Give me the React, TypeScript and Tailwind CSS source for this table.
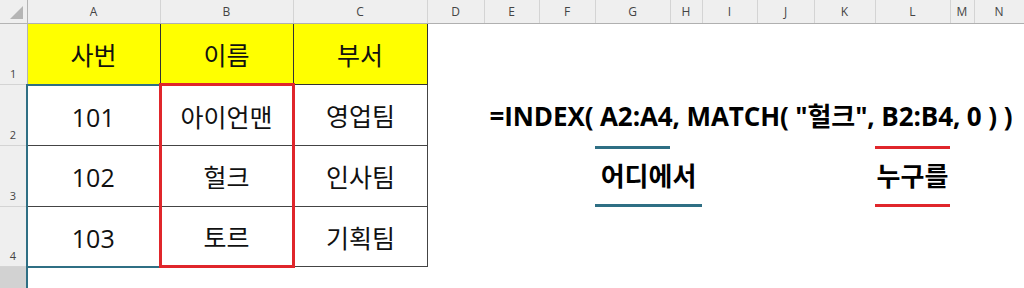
import React from 'react';

const cols = [
  { key: '', w: 27 },
  { key: 'A', w: 133 },
  { key: 'B', w: 133 },
  { key: 'C', w: 134 },
  { key: 'D', w: 57 },
  { key: 'E', w: 55 },
  { key: 'F', w: 56 },
  { key: 'G', w: 75 },
  { key: 'H', w: 32 },
  { key: 'I', w: 55 },
  { key: 'J', w: 57 },
  { key: 'K', w: 61 },
  { key: 'L', w: 75 },
  { key: 'M', w: 24 },
  { key: 'N', w: 50 },
];

const font = "font-['Open_Sans','Noto_Sans_CJK_KR',sans-serif]";

const rows = [
  ['101', '아이언맨', '영업팀'],
  ['102', '헐크', '인사팀'],
  ['103', '토르', '기획팀'],
];

function RowHead({ n, active }: { n?: number; active?: boolean }) {
  return (
    <td
      className={`p-0 align-bottom text-center text-[11px] text-[#444] pb-0.5 border-b border-[#d4d4d4] ${
        active ? 'bg-[#d2d2d2] border-r-2 border-r-[#2f6f84]' : 'bg-[#efefef] border-r border-r-[#b4b4b4]'
      }`}
    >
      {n}
    </td>
  );
}

// label between two rules, the top rule can be shorter than the bottom one
function Label({ text, color, top }: { text: string; color: string; top: string }) {
  return (
    <div className="h-[61px] flex flex-col justify-between">
      <div className={`h-[3px] ${top} ${color}`} />
      <div className="text-center text-[26px] font-bold text-black whitespace-nowrap leading-none">{text}</div>
      <div className={`h-[3px] w-full ${color}`} />
    </div>
  );
}

export default function App() {
  return (
    <div className={`w-[1024px] h-[288px] overflow-hidden bg-white ${font}`}>
      <table className="table-fixed border-collapse w-[1024px]">
        <colgroup>
          {cols.map((c) => (
            <col key={c.key + c.w} style={{ width: c.w }} />
          ))}
        </colgroup>
        <tbody>
          <tr className="h-[23px]">
            <td className="p-0 bg-[#efefef] border-b border-r border-[#b4b4b4]">
              <svg width="27" height="23" className="block">
                <polygon points="23,6 23,19 10,19" fill="#b5b5b5" />
              </svg>
            </td>
            {cols.slice(1).map((c) => (
              <td
                key={c.key}
                className="p-0 text-center text-[12px] text-[#444] bg-[#efefef] border-b border-b-[#b0b0b0] border-r border-r-[#d4d4d4]"
              >
                {c.key}
              </td>
            ))}
          </tr>

          <tr className="h-[61px]">
            <RowHead n={1} />
            {['사번', '이름', '부서'].map((t) => (
              <td key={t} className="p-0 pt-1 text-center text-[25px] text-[#111] bg-[#ffff00] border border-[#333]">
                {t}
              </td>
            ))}
            <td colSpan={11} />
          </tr>

          <tr className="h-[61px]">
            <RowHead n={2} />
            <td className="p-0 pt-1 text-center text-[25px] text-[#111] border border-[#444] border-t-2 border-t-[#2f6f84] border-l-2 border-l-[#2f6f84]">
              {rows[0][0]}
            </td>
            <td className="p-0 pt-1 text-center text-[25px] text-[#111] border border-[#444] border-t-[3px] border-t-[#e0262b] border-x-[3px] border-x-[#e0262b]">
              {rows[0][1]}
            </td>
            <td className="p-0 pt-1 text-center text-[25px] text-[#111] border border-[#444]">{rows[0][2]}</td>
            <td colSpan={11} className="p-0 pl-[62px] pt-0.5 text-[26px] font-bold text-black whitespace-nowrap tracking-[-0.1px]">
              =INDEX( A2:A4, MATCH( "헐크", B2:B4, 0 ) )
            </td>
          </tr>

          <tr className="h-[61px]">
            <RowHead n={3} />
            <td className="p-0 pt-1 text-center text-[25px] text-[#111] border border-[#444] border-l-2 border-l-[#2f6f84]">
              {rows[1][0]}
            </td>
            <td className="p-0 pt-1 text-center text-[25px] text-[#111] border border-[#444] border-x-[3px] border-x-[#e0262b]">
              {rows[1][1]}
            </td>
            <td className="p-0 pt-1 text-center text-[25px] text-[#111] border border-[#444]">{rows[1][2]}</td>
            <td colSpan={3} />
            <td colSpan={2} className="p-0 align-top">
              <Label text="어디에서" color="bg-[#2f6f84]" top="w-[75px]" />
            </td>
            <td colSpan={3} />
            <td className="p-0 align-top">
              <Label text="누구를" color="bg-[#e0262b]" top="w-full" />
            </td>
            <td colSpan={2} />
          </tr>

          <tr className="h-[60px]">
            <RowHead n={4} />
            <td className="p-0 pt-1 text-center text-[25px] text-[#111] border border-[#444] border-l-2 border-l-[#2f6f84] border-b-2 border-b-[#2f6f84]">
              {rows[2][0]}
            </td>
            <td className="p-0 pt-1 text-center text-[25px] text-[#111] border border-[#444] border-b-[3px] border-b-[#e0262b] border-x-[3px] border-x-[#e0262b]">
              {rows[2][1]}
            </td>
            <td className="p-0 pt-1 text-center text-[25px] text-[#111] border border-[#444]">{rows[2][2]}</td>
            <td colSpan={11} />
          </tr>

          <tr className="h-[30px]">
            <RowHead active />
            <td colSpan={14} />
          </tr>
        </tbody>
      </table>
    </div>
  );
}
